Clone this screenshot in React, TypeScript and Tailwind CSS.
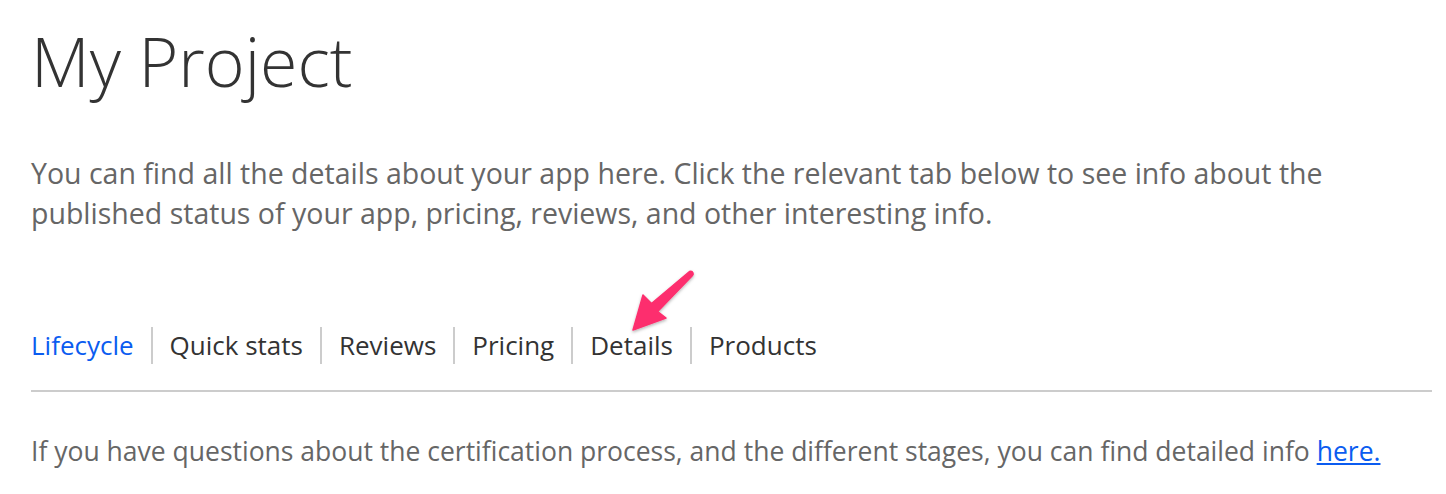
import * as React from "react";

const tabs = ["Lifecycle", "Quick stats", "Reviews", "Pricing", "Details", "Products"];

function Arrow() {
  // hand-drawn style callout arrow pointing at the "Details" tab
  return (
    <svg
      className="absolute left-[620px] top-[262px] pointer-events-none"
      width="84"
      height="80"
      viewBox="620 262 84 80"
    >
      <defs>
        <filter id="arrow-shadow" x="-30%" y="-30%" width="160%" height="160%">
          <feDropShadow dx="0" dy="1.5" stdDeviation="1.5" floodColor="#000" floodOpacity="0.3" />
        </filter>
      </defs>
      <path
        d="M633 330 L643 295 L651.5 303.5 L689.5 271.5 Q692 270.5 693 273 Q693.5 274.5 692.5 275.5 L657.7 311.5 L666 318 Z"
        fill="#fd2f6e"
        stroke="#fd2f6e"
        strokeWidth="1.5"
        strokeLinejoin="round"
        filter="url(#arrow-shadow)"
      />
    </svg>
  );
}

export default function App() {
  const [active] = React.useState("Lifecycle");

  return (
    <div className="relative w-full h-[494px] bg-white pl-[31px] pr-[14px] font-['Open_Sans',sans-serif] overflow-hidden">
      <h1 className="mt-[27px] text-[68px] leading-none font-light text-[#333]">My Project</h1>

      <p className="mt-[58px] text-[28.5px] leading-[40px] text-[#666] whitespace-nowrap">
        You can find all the details about your app here. Click the relevant tab below to see info about the
        <br />
        published status of your app, pricing, reviews, and other interesting info.
      </p>

      <nav className="mt-[94px] flex items-center">
        {tabs.map((t, i) => (
          <div
            key={t}
            className={
              i === 0
                ? "h-[37px] pr-[17px] text-[26px] leading-[37px]"
                : "h-[37px] px-[17px] border-l-2 border-[#ccc] text-[26px] leading-[37px]"
            }
          >
            <span className={t === active ? "text-[#0b5cf0]" : "text-[#333]"}>{t}</span>
          </div>
        ))}
      </nav>

      <div className="mt-[26px] border-t-2 border-[#ccc]" />

      <p className="mt-[42px] text-[26.5px] leading-[35px] text-[#666] whitespace-nowrap">
        If you have questions about the certification process, and the different stages, you can find detailed info{" "}
        <a href="#" className="text-[#0b5cf0] underline">
          here.
        </a>
      </p>

      <Arrow />
    </div>
  );
}
